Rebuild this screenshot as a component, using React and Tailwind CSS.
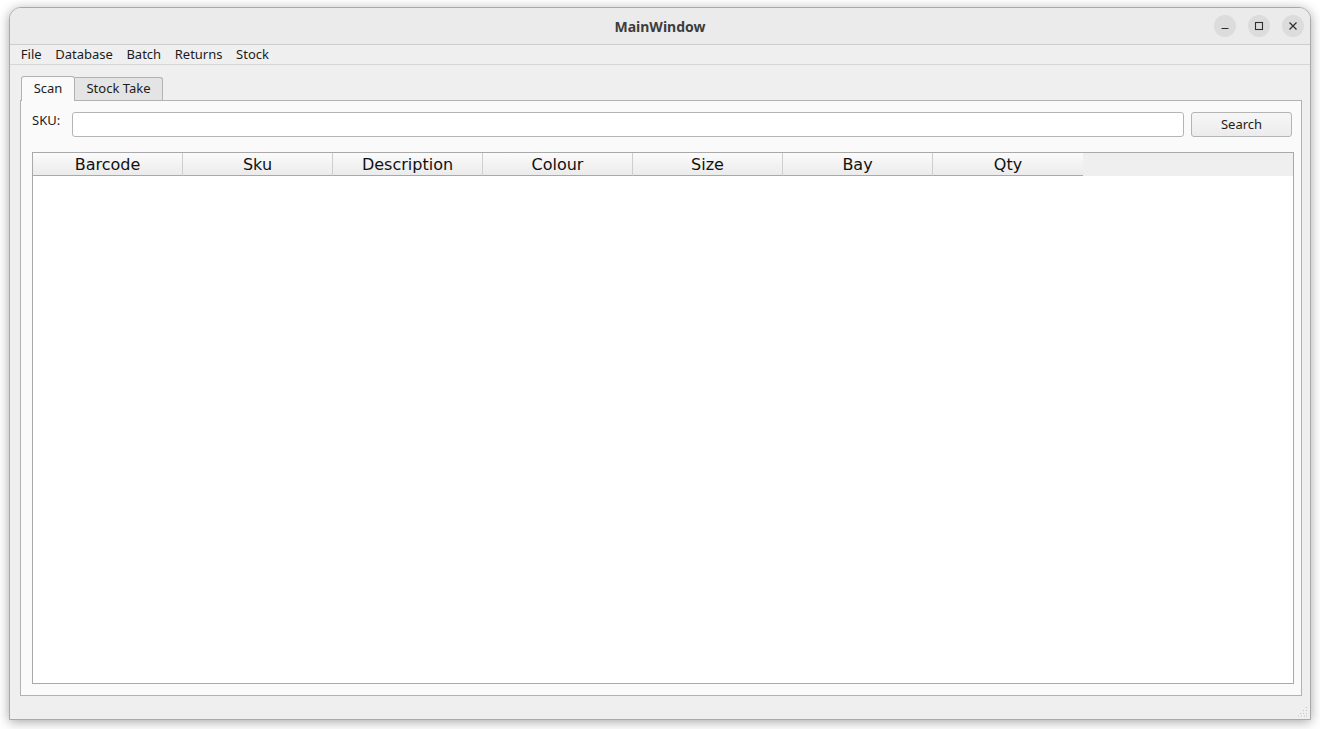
import React from 'react';

const columns = ['Barcode', 'Sku', 'Description', 'Colour', 'Size', 'Bay', 'Qty'];
const menus = ['File', 'Database', 'Batch', 'Returns', 'Stock'];

const TitleButton = ({ children }) => (
  <div className="w-[22px] h-[22px] rounded-full bg-[#dcdcdc] flex items-center justify-center text-[#2e2e2e]">
    {children}
  </div>
);

const App = () => {
  return (
    <div className="w-[1320px] h-[729px] bg-white pl-[9px] pt-[7px] overflow-hidden font-['Noto_Sans',sans-serif]">
      {/* Window frame */}
      <div className="w-[1302px] h-[713px] flex flex-col bg-[#efefef] border border-[#a9a9a9] rounded-t-[12px] overflow-hidden shadow-[0_2px_12px_rgba(0,0,0,0.35)]">

        {/* Title bar */}
        <div className="h-[37px] flex-shrink-0 bg-[#ebebeb] border-b border-[#cdcdcd] grid grid-cols-[1fr_auto_1fr] items-center">
          <div />
          <div className="text-[14px] font-bold text-[#3d3d3d] pt-[1px]">MainWindow</div>
          <div className="flex justify-end gap-[12px] pr-[6px]">
            <TitleButton>
              <svg width="10" height="10" viewBox="0 0 10 10"><path d="M1.5 7.5h7" stroke="currentColor" strokeWidth="1.1" /></svg>
            </TitleButton>
            <TitleButton>
              <svg width="10" height="10" viewBox="0 0 10 10"><rect x="1.5" y="1.5" width="7" height="7" fill="none" stroke="currentColor" strokeWidth="1.1" /></svg>
            </TitleButton>
            <TitleButton>
              <svg width="10" height="10" viewBox="0 0 10 10"><path d="M1.5 1.5l7 7M8.5 1.5l-7 7" stroke="currentColor" strokeWidth="1.2" /></svg>
            </TitleButton>
          </div>
        </div>

        {/* Menu bar */}
        <div className="h-[20px] flex-shrink-0 flex items-center pl-[4px] border-b border-[#d6d6d6] text-[13px] text-[#1c1c1c]">
          {menus.map((m) => (
            <span key={m} className="px-[6.8px] leading-none">{m}</span>
          ))}
        </div>

        {/* Central widget */}
        <div className="flex-1 flex flex-col pl-[10px] pr-[8px] pt-[10px]">
          {/* Tabs */}
          <div className="flex items-end h-[25px] pl-[1px] text-[13px] text-[#1c1c1c]">
            <div className="h-[25px] w-[54px] flex items-center justify-center bg-[#fafafa] border border-b-0 border-[#b2b2b2] rounded-t-[3px] relative -mb-[1px] z-10 pb-[1px]">
              Scan
            </div>
            <div className="h-[23px] w-[88px] flex items-center justify-center bg-[#e4e4e4] border border-l-0 border-b-0 border-[#b2b2b2] rounded-tr-[3px]">
              Stock Take
            </div>
          </div>

          {/* Tab pane */}
          <div className="h-[596px] bg-[#fafafa] border border-[#b2b2b2] flex flex-col pl-[11px] pr-[7px] pt-[11px] pb-[11px]">
            <div className="flex items-center h-[25px] text-[13px] text-[#1c1c1c]">
              <span className="w-[40px] -mt-[8px]">SKU:</span>
              <div className="flex-1 h-[25px] bg-white border border-[#b4b4b4] rounded-[3px]" />
              <button className="ml-[7px] w-[101px] h-[25px] mr-[2px] bg-gradient-to-b from-[#f6f6f6] to-[#ececec] border border-[#b4b4b4] rounded-[3px] text-[13px] text-[#1c1c1c]">
                Search
              </button>
            </div>

            {/* Table */}
            <div className="mt-[15px] flex-1 border border-[#a9a9a9] bg-white flex flex-col">
              <div className="flex h-[23px] bg-[#efefef] font-['DejaVu_Sans',sans-serif] text-[16px] text-[#111]">
                {columns.map((c, i) => (
                  <div
                    key={c}
                    className={`w-[150px] flex items-center justify-center pt-[2px] bg-gradient-to-b from-[#fbfbfb] to-[#ebebeb] border-b border-[#a9a9a9] ${i < columns.length - 1 ? 'border-r border-r-[#cfcfcf]' : ''}`}
                  >
                    {c}
                  </div>
                ))}
              </div>
              <div className="flex-1 bg-white" />
            </div>
          </div>

          {/* Status bar */}
          <div className="flex-1 flex items-end justify-end pb-[2px] -mr-[6px]">
            <svg width="10" height="10" viewBox="0 0 10 10" fill="#c4c4c4">
              <rect x="8" y="0" width="1" height="1" />
              <rect x="5" y="3" width="1" height="1" />
              <rect x="8" y="3" width="1" height="1" />
              <rect x="2" y="6" width="1" height="1" />
              <rect x="5" y="6" width="1" height="1" />
              <rect x="8" y="6" width="1" height="1" />
              <rect x="0" y="8.5" width="1" height="1" />
              <rect x="3" y="8.5" width="1" height="1" />
              <rect x="6" y="8.5" width="1" height="1" />
              <rect x="8" y="8.5" width="1" height="1" />
            </svg>
          </div>
        </div>
      </div>
    </div>
  );
};

export default App;
